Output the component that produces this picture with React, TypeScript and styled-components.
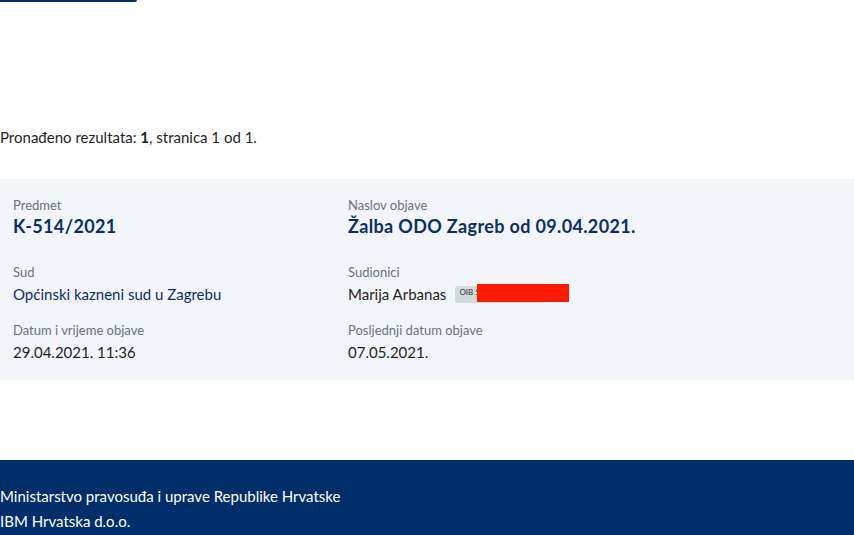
import React from "react";
import styled, { createGlobalStyle } from "styled-components";

const Global = createGlobalStyle`
  html, body { margin: 0; padding: 0; background: #fff; }
  body { font-family: Lato, "Open Sans", sans-serif; color: #1f1f1f; }
`;

const Page = styled.div`
  width: 854px;
  height: 535px;
  display: flex;
  flex-direction: column;
  overflow: hidden;
`;

const TopButtonEdge = styled.div`
  width: 137px;
  height: 2px;
  background: #0b2e6b;
  border-bottom-right-radius: 2px;
`;

const ResultCount = styled.p`
  margin: 125px 0 0 0;
  font-size: 15px;
  line-height: 20px;
  color: #1f1f1f;
  b { font-weight: 700; }
`;

const Card = styled.section`
  margin-top: 32px;
  background: #f2f5f9;
  box-shadow: 0 1px 2px rgba(0, 0, 0, 0.08);
  padding: 17px 13px 16px 13px;
  display: grid;
  grid-template-columns: 335px 1fr;
`;

const Field = styled.div<{ $gap?: number }>`
  display: flex;
  flex-direction: column;
  margin-bottom: ${(p) => p.$gap ?? 0}px;
`;

const Label = styled.span`
  font-size: 13px;
  line-height: 18px;
  color: #6b7280;
`;

const Title = styled.span`
  font-size: 18px;
  line-height: 24px;
  font-weight: 700;
  letter-spacing: 0.35px;
  color: #0b2e6b;
`;

const LinkValue = styled.span`
  margin-top: 3px;
  font-size: 15px;
  line-height: 20px;
  color: #0b2e6b;
`;

const Value = styled.span`
  margin-top: 3px;
  font-size: 15px;
  line-height: 20px;
  color: #1f1f1f;
  display: flex;
  align-items: center;
`;

const Badge = styled.span`
  position: relative;
  margin-left: 9px;
  width: 90px;
  height: 17px;
  border-radius: 3px;
  background: #d2dadb;
  font-size: 8px;
  color: #333;
  padding: 2px 0 0 4px;
  box-sizing: border-box;
  line-height: 9px;
`;

const Redaction = styled.span`
  position: absolute;
  left: 22px;
  top: -2px;
  width: 92px;
  height: 18px;
  background: #ff1a00;
`;

const Spacer = styled.div`
  flex: 1;
`;

const Footer = styled.footer`
  height: 75px;
  background: #002e6b;
  color: #fff;
  font-size: 15px;
  line-height: 25px;
  padding-top: 24px;
  box-sizing: border-box;
`;

export default function App() {
  return (
    <>
      <Global />
      <Page>
        <TopButtonEdge />
        <ResultCount>
          Pronađeno rezultata: <b>1</b>, stranica 1 od 1.
        </ResultCount>
        <Card>
          <Field $gap={25}>
            <Label>Predmet</Label>
            <Title>K-514/2021</Title>
          </Field>
          <Field $gap={25}>
            <Label>Naslov objave</Label>
            <Title>Žalba ODO Zagreb od 09.04.2021.</Title>
          </Field>
          <Field $gap={17}>
            <Label>Sud</Label>
            <LinkValue>Općinski kazneni sud u Zagrebu</LinkValue>
          </Field>
          <Field $gap={17}>
            <Label>Sudionici</Label>
            <Value>
              Marija Arbanas
              <Badge>
                OIB 5
                <Redaction />
              </Badge>
            </Value>
          </Field>
          <Field>
            <Label>Datum i vrijeme objave</Label>
            <Value>29.04.2021. 11:36</Value>
          </Field>
          <Field>
            <Label>Posljednji datum objave</Label>
            <Value>07.05.2021.</Value>
          </Field>
        </Card>
        <Spacer />
        <Footer>
          Ministarstvo pravosuđa i uprave Republike Hrvatske
          <br />
          IBM Hrvatska d.o.o.
        </Footer>
      </Page>
    </>
  );
}
